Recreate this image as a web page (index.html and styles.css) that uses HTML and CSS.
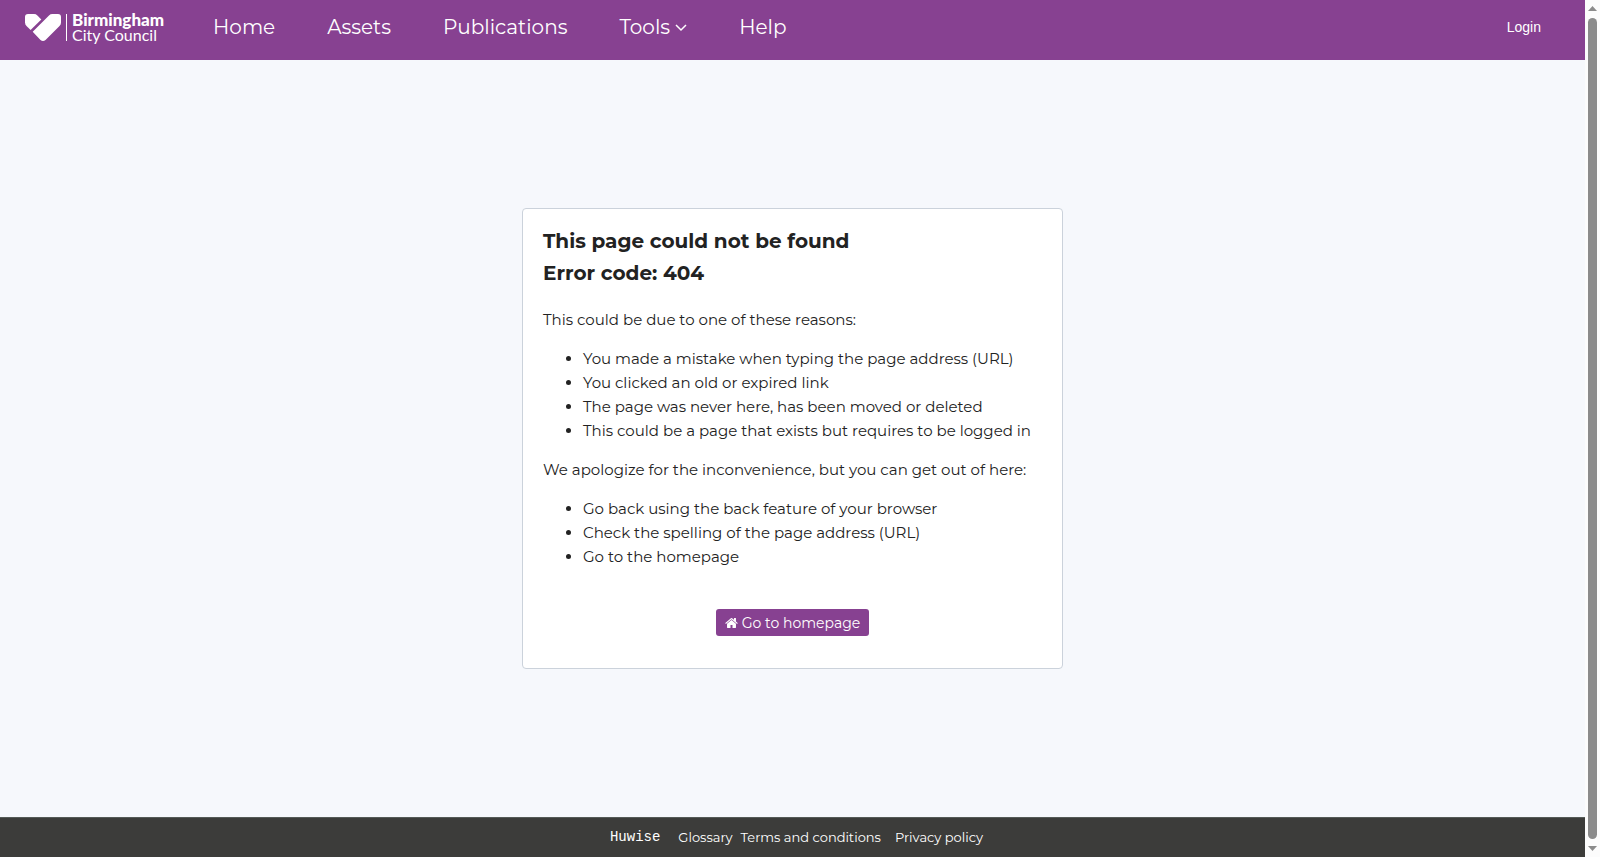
FILE: index.html
```
<!DOCTYPE html>
<html lang="en">
<head>
    <meta charset="UTF-8">
    <meta name="viewport" content="width=device-width, initial-scale=1.0">
    <title>Page not found</title>
    <link rel="stylesheet" href="styles.css">
</head>
<body>

<div class="page">
    <header class="header">
        <a class="brand" href="/">
            <svg class="brand-heart" viewBox="0 0 36 27" aria-hidden="true">
                <path d="M0 3 Q0 0 3 0 H9 Q11 0 12.400 1.400 L16.300 5.400 L5.600 16 L1.500 12 Q0 10.500 0 8.500 Z"/>
                <path d="M7.700 17.700 L24 1.400 Q25.400 0 27.400 0 H33 Q36 0 36 3 V8.500 Q36 10.500 34.500 12 L20.500 26 Q18 28 15.500 26 Z"/>
            </svg>
            <span class="brand-name"><b>Birmingham</b><span>City Council</span></span>
        </a>
        <nav class="nav">
            <a href="#">Home</a>
            <a href="#">Assets</a>
            <a href="#">Publications</a>
            <a href="#">Tools <svg class="chevron" viewBox="0 0 12 10" aria-hidden="true"><path d="M1 1 L6 6 L11 1"/></svg></a>
            <a href="#">Help</a>
        </nav>
        <a class="login" href="#">Login</a>
    </header>

    <main class="main">
        <section class="error-box">
            <h1>This page could not be found<br>Error code: 404</h1>
            <p>This could be due to one of these reasons:</p>
            <ul>
                <li>You made a mistake when typing the page address (URL)</li>
                <li>You clicked an old or expired link</li>
                <li>The page was never here, has been moved or deleted</li>
                <li>This could be a page that exists but requires to be logged in</li>
            </ul>
            <p>We apologize for the inconvenience, but you can get out of here:</p>
            <ul>
                <li>Go back using the back feature of your browser</li>
                <li>Check the spelling of the page address (URL)</li>
                <li>Go to the homepage</li>
            </ul>
            <a class="button" href="/">
                <svg class="home-icon" viewBox="0 248 1664 1288" aria-hidden="true">
                    <path d="M1408 992v480q0 26-19 45t-45 19h-384v-384h-256v384h-384q-26 0-45-19t-19-45v-480q0-1 .5-3t.5-3l575-474 575 474q1 2 1 6zm223-69l-62 74q-8 9-21 11h-3q-13 0-21-7l-692-577-692 577q-12 8-24 7-13-2-21-11l-62-74q-8-10-7-23.500t11-21.500l719-599q32-26 76-26t76 26l244 204v-195q0-14 9-23t23-9h192q14 0 23 9t9 23v408l219 182q10 8 11 21.500t-7 23.500z"/>
                </svg>
                Go to homepage
            </a>
        </section>
    </main>

    <footer class="footer">
        <a class="huwise" href="#">Huwise</a>
        <a href="#">Glossary</a>
        <a href="#">Terms and conditions</a>
        <a class="privacy" href="#">Privacy policy</a>
    </footer>
</div>

<!-- scroll track -->
<div class="scrollbar" aria-hidden="true">
    <svg class="arrow" viewBox="0 0 9 5"><path d="M0 5 L4.500 0 L9 5 Z"/></svg>
    <div class="thumb"></div>
    <svg class="arrow" viewBox="0 0 9 5"><path d="M0 0 L4.500 5 L9 0 Z"/></svg>
</div>

</body>
</html>
```
FILE: styles.css
```
* {
    box-sizing: border-box;
}
body {
    margin: 0;
    min-height: 100vh;
    display: flex;
    font-family: Montserrat, Inter, sans-serif;
    font-size: 15px;
    line-height: 24px;
    color: #222;
    background-color: #f6f8fc;
}
a {
    color: #fff;
    text-decoration: none;
}
.page {
    flex: 1;
    display: flex;
    flex-direction: column;
}
/* header */
.header {
    height: 60px;
    padding: 0 44px 6px 25px;
    display: flex;
    align-items: center;
    background-color: #874191;
}
.brand {
    display: flex;
    gap: 5px;
}
.brand-heart {
    width: 36px;
    height: 27px;
    fill: #fff;
}
.brand-name {
    display: flex;
    flex-direction: column;
    justify-content: center;
    height: 27px;
    padding-left: 5px;
    border-left: 1px solid #fff;
    font-family: Lato, sans-serif;
    font-size: 16px;
    line-height: 15px;
}
.brand-name b {
    font-size: 17px;
    font-weight: 900;
}
.nav {
    flex: 1;
    display: flex;
    gap: 52px;
    padding-left: 49px;
    font-size: 20px;
}
.chevron {
    width: 12px;
    height: 10px;
    vertical-align: middle;
    fill: none;
    stroke: #fff;
    stroke-width: 1.5;
}
.login {
    font-family: "Liberation Sans", Arial, sans-serif;
    font-size: 14px;
}
/* error box */
.main {
    flex: 1;
    display: flex;
    align-items: center;
    justify-content: center;
}
.error-box {
    width: 100%;
    max-width: 541px;
    padding: 16px 20px 32px;
    display: flex;
    flex-direction: column;
    background-color: #fff;
    border: 1px solid #cbd2db;
    border-radius: 4px;
}
.error-box h1 {
    margin: 0 0 19px;
    font-size: 20px;
    line-height: 32px;
}
.error-box p {
    margin: 0 0 15px;
}
.error-box ul {
    margin: 0 0 15px;
    padding-left: 40px;
}
.button {
    align-self: center;
    display: flex;
    align-items: center;
    gap: 4px;
    height: 27px;
    margin-top: 25px;
    padding: 0 9px;
    font-size: 14px;
    background-color: #874191;
    border-radius: 3px;
}
.home-icon {
    width: 13px;
    height: 10px;
    fill: #fff;
}
/* footer */
.footer {
    height: 40px;
    padding: 0 0 1px 8px;
    display: flex;
    align-items: center;
    justify-content: center;
    gap: 8px;
    font-size: 13px;
    background-color: #3c3c3a;
    border-top: 1px solid #555b57;
}
.footer .huwise {
    margin-right: 10px;
    font-family: "Liberation Mono", monospace;
    font-size: 14px;
}
.footer .privacy {
    margin-left: 6px;
}
/* scroll track */
.scrollbar {
    width: 15px;
    padding: 6px 3px;
    display: flex;
    flex-direction: column;
    align-items: center;
    gap: 7px;
    background-color: #fcfcfc;
}
.arrow {
    width: 9px;
    height: 5px;
    fill: #8b8b8b;
}
.thumb {
    flex: 1;
    width: 9px;
    background-color: #8b8b8b;
    border-radius: 5px;
}
```
